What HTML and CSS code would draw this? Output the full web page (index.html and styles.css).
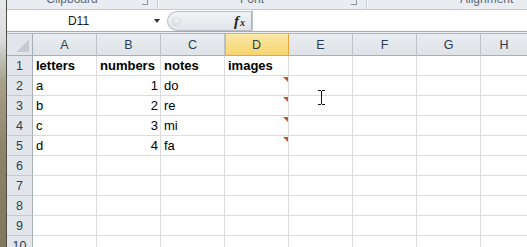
FILE: index.html
```html
<!DOCTYPE html>
<html>
<head>
<meta charset="utf-8">
<link rel="stylesheet" href="styles.css">
</head>
<body>
<div class="window">
  <div class="frame"></div>
  <div class="app">
    <div class="ribbon">
      <div class="group g-clip"><span class="label">Clipboard</span><span class="launcher"></span></div>
      <div class="group g-font"><span class="label">Font</span><span class="launcher"></span></div>
      <div class="group g-align"><span class="label">Alignment</span></div>
    </div>
    <div class="formula-bar">
      <div class="namebox"><span class="name">D11</span><span class="arrow"></span></div>
      <div class="fx-area"><span class="grip"></span><span class="fx"><span class="fx-f">f</span><span class="fx-x">x</span></span></div>
      <div class="input"></div>
    </div>
    <div class="sep"></div>
    <div class="sheet">
      <div class="hd corner"><span class="tri"></span></div>
      <div class="hd col">A</div><div class="hd col">B</div><div class="hd col">C</div><div class="hd col sel">D</div><div class="hd col">E</div><div class="hd col">F</div><div class="hd col">G</div><div class="hd col last">H</div>

      <div class="hd row">1</div>
      <div class="c b">letters</div><div class="c b">numbers</div><div class="c b">notes</div><div class="c b">images</div><div class="c"></div><div class="c"></div><div class="c"></div><div class="c last"></div>

      <div class="hd row">2</div>
      <div class="c">a</div><div class="c num">1</div><div class="c">do</div><div class="c note"></div><div class="c"></div><div class="c"></div><div class="c"></div><div class="c last"></div>

      <div class="hd row">3</div>
      <div class="c">b</div><div class="c num">2</div><div class="c">re</div><div class="c note"></div><div class="c"></div><div class="c"></div><div class="c"></div><div class="c last"></div>

      <div class="hd row">4</div>
      <div class="c">c</div><div class="c num">3</div><div class="c">mi</div><div class="c note"></div><div class="c"></div><div class="c"></div><div class="c"></div><div class="c last"></div>

      <div class="hd row">5</div>
      <div class="c">d</div><div class="c num">4</div><div class="c">fa</div><div class="c note"></div><div class="c"></div><div class="c"></div><div class="c"></div><div class="c last"></div>

      <div class="hd row">6</div>
      <div class="c"></div><div class="c"></div><div class="c"></div><div class="c"></div><div class="c"></div><div class="c"></div><div class="c"></div><div class="c last"></div>

      <div class="hd row">7</div>
      <div class="c"></div><div class="c"></div><div class="c"></div><div class="c"></div><div class="c"></div><div class="c"></div><div class="c"></div><div class="c last"></div>

      <div class="hd row">8</div>
      <div class="c"></div><div class="c"></div><div class="c"></div><div class="c"></div><div class="c"></div><div class="c"></div><div class="c"></div><div class="c last"></div>

      <div class="hd row">9</div>
      <div class="c"></div><div class="c"></div><div class="c"></div><div class="c"></div><div class="c"></div><div class="c"></div><div class="c"></div><div class="c last"></div>

      <div class="hd row">10</div>
      <div class="c"></div><div class="c"></div><div class="c"></div><div class="c"></div><div class="c"></div><div class="c"></div><div class="c"></div><div class="c last"></div>
    </div>
  </div>
  <svg class="ibeam" width="7" height="15" viewBox="0 0 7 15">
    <path d="M0 0.5H3M4 0.5H7M3.5 1V14M0 14.5H3M4 14.5H7" stroke="#111" stroke-width="1" fill="none"/>
  </svg>
</div>
</body>
</html>
```

FILE: styles.css
```css
html, body {
  margin: 0;
  padding: 0;
  background: #ffffff;
  overflow: hidden;
}
.window {
  position: relative;
  display: flex;
  width: 527px;
  height: 247px;
  overflow: hidden;
  font-family: "Liberation Sans", Arial, sans-serif;
}
.frame {
  width: 6px;
  flex: none;
  border-right: 1px solid #4e4c46;
  background: linear-gradient(#e6e8ea 0px, #d9dbdc 40px, #a9a28c 80px, #8c846a 150px, #7f785c 247px);
}
.app {
  flex: 1;
  display: flex;
  flex-direction: column;
  min-width: 0;
}
.app > * { flex: none; }
/* ribbon bottom strip */
.ribbon {
  height: 10px;
  box-sizing: border-box;
  border-bottom: 1px solid #c5cbd3;
  background: #e9edf1;
  display: flex;
  overflow: hidden;
}
.group {
  flex: none;
  display: flex;
  align-items: flex-start;
  border-right: 1px solid #c9cfd6;
  box-shadow: 1px 0 0 #f7f9fb;
}
.g-clip { width: 150px; }
.g-font { width: 208px; }
.g-align { width: 240px; border-right: none; box-shadow: none; }
.label {
  flex: 1;
  text-align: center;
  font-size: 12px;
  line-height: 12px;
  margin-top: -7px;
  color: #5d6978;
}
.g-align .label {
  flex: none;
  margin-left: 93px;
}
.launcher {
  width: 5px;
  height: 4px;
  margin: 0 9px 0 5px;
  border-right: 1px solid #8a95a3;
  border-bottom: 1px solid #8a95a3;
}
/* formula bar */
.formula-bar {
  height: 21px;
  display: flex;
  background: #ffffff;
}
.namebox {
  width: 160px;
  display: flex;
  align-items: center;
}
.name {
  flex: 1;
  text-align: center;
  font-size: 12px;
  color: #1b1b1b;
  padding-right: 4px;
  padding-top: 1px;
}
.arrow {
  width: 0;
  height: 0;
  border-left: 3.5px solid transparent;
  border-right: 3.5px solid transparent;
  border-top: 4px solid #333;
  margin-right: 7px;
  margin-top: 1px;
}
.fx-area {
  width: 85px;
  height: 20px;
  margin-top: 1px;
  box-sizing: border-box;
  border: 1px solid #b7bec7;
  border-right: 1px solid #a9b0b9;
  border-radius: 10px 0 0 10px;
  background: linear-gradient(#f1f3f5, #e1e5ea);
  display: flex;
  align-items: center;
  justify-content: space-between;
  padding: 0 6px 0 4px;
}
.grip {
  width: 9px;
  height: 9px;
  border-radius: 50%;
  background: radial-gradient(circle at 50% 40%, #f3f4f6 0, #dcdfe3 60%, #c9cdd2 100%);
}
.fx {
  font-family: "Liberation Serif", "Times New Roman", serif;
  font-style: italic;
  font-weight: bold;
  color: #222;
  display: flex;
  align-items: baseline;
}
.fx-f { font-size: 15px; }
.fx-x { font-size: 10px; margin-left: 1px; }
.input {
  flex: 1;
  border-left: 1px solid #c3c9d0;
  background: #fff;
}
.sep {
  height: 3px;
  box-sizing: border-box;
  border-top: 1px solid #a5abb3;
  border-bottom: 1px solid #b0b6be;
  background: #eceef1;
}
/* sheet */
.sheet {
  display: grid;
  grid-template-columns: 26px repeat(7, 64px) 1fr;
  grid-template-rows: 22px;
  grid-auto-rows: 20px;
}
.hd {
  box-sizing: border-box;
  background: #e2e6eb;
  color: #2a3d57;
  font-size: 12.5px;
  text-align: center;
}
.corner {
  border-right: 1px solid #a7aeb8;
  border-bottom: 1px solid #a7aeb8;
  display: flex;
  justify-content: flex-end;
  align-items: flex-end;
  padding: 0 3px 3px 0;
}
.tri {
  width: 12px;
  height: 12px;
  background: linear-gradient(to bottom right, transparent 50%, #c6cacf 50%);
}
.col {
  border-right: 1px solid #bcc3cb;
  border-bottom: 1px solid #a7aeb8;
  line-height: 18px;
  padding-top: 2px;
  background: linear-gradient(#e9ecf0, #dfe3e8);
}
.col.last { border-right: none; }
.col.sel {
  background: linear-gradient(#fbe8a8, #f7d46e);
  border-right: 1px solid #e9a63f;
  border-bottom: 1px solid #f0a23a;
  box-shadow: inset 1px 0 0 #e9b25a;
  color: #2a3d57;
}
.row {
  border-right: 1px solid #a7aeb8;
  border-bottom: 1px solid #c4c9cf;
  line-height: 18px;
  padding-top: 1px;
}
.c {
  position: relative;
  box-sizing: border-box;
  border-right: 1px solid #dadcdd;
  border-bottom: 1px solid #dadcdd;
  font-size: 13px;
  line-height: 18px;
  padding: 1px 2px 0 3px;
  color: #000;
  white-space: nowrap;
  overflow: hidden;
}
.c.last { border-right: none; }
.c.b { font-weight: bold; }
.c.num { text-align: right; }
.c.note::after {
  content: "";
  position: absolute;
  top: 1px;
  right: 0;
  width: 0;
  height: 0;
  border-top: 5px solid #c2581e;
  border-left: 5px solid transparent;
}
.ibeam {
  position: absolute;
  left: 318px;
  top: 90px;
}
```
